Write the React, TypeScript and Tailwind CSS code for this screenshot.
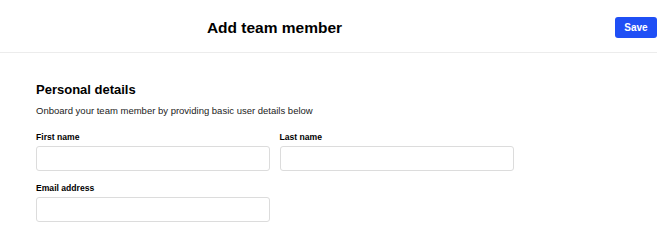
export default function App() {
  return (
    <div className="w-[657px] bg-white text-black" style={{ fontFamily: '"Liberation Sans", Arial, sans-serif' }}>
      <div className="flex h-[53px] items-center border-b border-[#ececec]">
        <div className="ml-[36px] w-[477px] pt-[3px] text-center text-[15.5px] font-bold leading-[20px]">Add team member</div>
        <div className="ml-auto">
          <button className="h-[21px] w-[42px] rounded-[3px] bg-[#1f4ff5] text-[10px] font-bold text-white">Save</button>
        </div>
      </div>
      <div className="px-[36px] pt-[28px]">
        <h2 className="text-[13px] font-bold leading-[18px]">Personal details</h2>
        <p className="mt-[5px] text-[9.5px] leading-[14px] text-[#222]">Onboard your team member by providing basic user details below</p>
        <div className="mt-[13px] grid w-[477px] grid-cols-2 gap-x-[10px] gap-y-[11px]">
          <div>
            <label className="block text-[8.6px] font-bold leading-[12px]">First name</label>
            <input className="mt-[3px] block h-[25px] w-[234px] rounded-[3px] border border-[#dcdcdc]" />
          </div>
          <div>
            <label className="block text-[8.6px] font-bold leading-[12px]">Last name</label>
            <input className="mt-[3px] block h-[25px] w-[234px] rounded-[3px] border border-[#dcdcdc]" />
          </div>
          <div>
            <label className="block text-[8.6px] font-bold leading-[12px]">Email address</label>
            <input className="mt-[3px] block h-[25px] w-[234px] rounded-[3px] border border-[#dcdcdc]" />
          </div>
        </div>
      </div>
    </div>
  );
}
